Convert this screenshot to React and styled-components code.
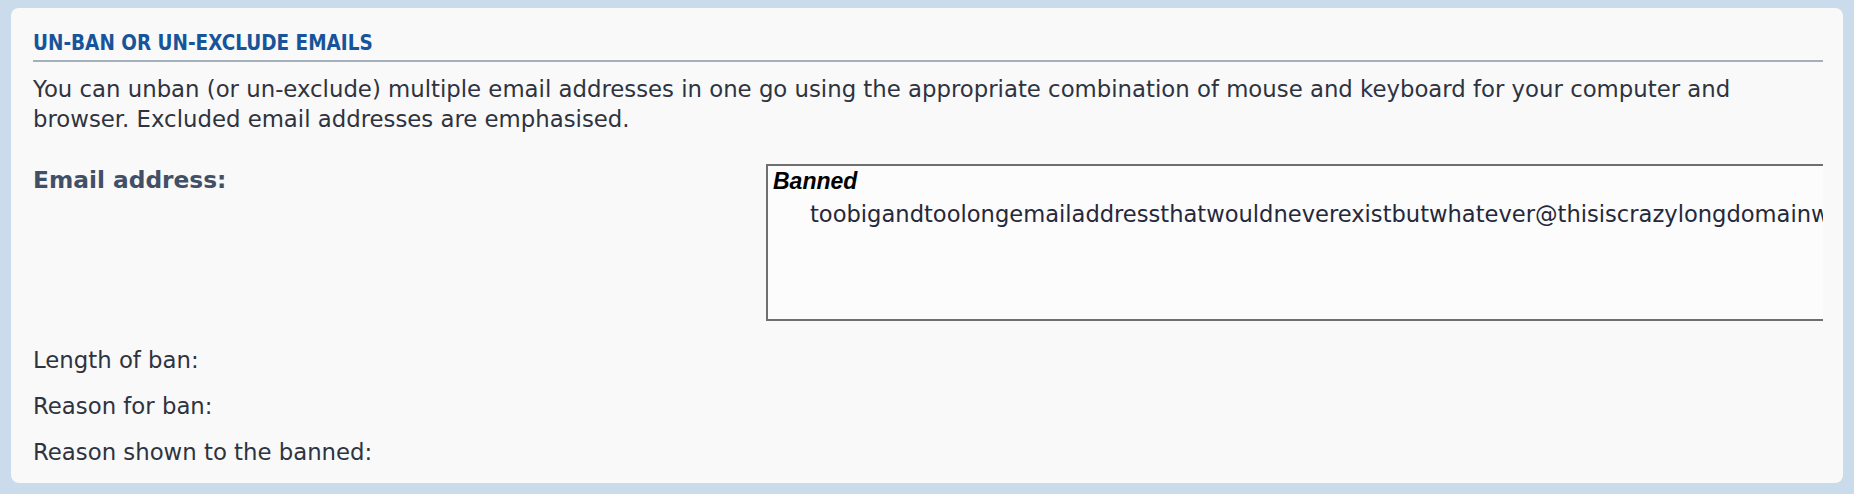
import React from "react";
import styled, { createGlobalStyle } from "styled-components";

const GlobalStyle = createGlobalStyle`
  html, body {
    margin: 0;
    padding: 0;
  }
  body {
    background: #cadcec;
    font-family: "DejaVu Sans", Verdana, sans-serif;
  }
`;

const Page = styled.div`
  display: flex;
  flex-direction: column;
  box-sizing: border-box;
  height: 100vh;
  padding: 8px 11px 11px 11px;
`;

const Panel = styled.section`
  flex: 1;
  min-width: 0;
  background: #f9f9f9;
  border-radius: 8px;
  padding: 23px 20px 0 22px;
  overflow: hidden;
`;

const Heading = styled.h3`
  margin: 0;
  padding-bottom: 5px;
  border-bottom: 2px solid #a5b0bd;
  font-family: "DejaVu Sans Condensed", "DejaVu Sans", sans-serif;
  font-stretch: condensed;
  font-weight: bold;
  font-size: 20.5px;
  line-height: 24px;
  color: #17549a;
  text-transform: uppercase;
`;

const Intro = styled.p`
  margin: 12px 0 0;
  font-size: 22.8px;
  line-height: 30px;
  color: #2f3340;
`;

const Form = styled.div`
  margin-top: 30px;
  display: flex;
  flex-direction: column;
`;

const Row = styled.div`
  display: grid;
  grid-template-columns: 733px minmax(0, 1fr);
  padding: ${({ $pad }) => $pad || "10px 0"};
`;

const Label = styled.div`
  padding-top: ${({ $top }) => $top || 0}px;
  font-size: ${({ $bold }) => ($bold ? "23.3px" : "22.8px")};
  font-weight: ${({ $bold }) => ($bold ? "bold" : "normal")};
  line-height: 26px;
  color: ${({ $bold }) => ($bold ? "#425067" : "#2f3340")};
`;

const Field = styled.div`
  min-width: 0;
  overflow: hidden;
`;

const ListBox = styled.div`
  box-sizing: border-box;
  width: 1300px;
  height: 157px;
  border: 2px solid #6f6f6f;
  background: #fcfcfc;
  padding: 2px 0 0 5px;
  overflow: hidden;
`;

const GroupLabel = styled.div`
  font-family: "Liberation Sans", Arial, sans-serif;
  font-weight: bold;
  font-style: italic;
  font-size: 23px;
  line-height: 26px;
  color: #000;
`;

const Option = styled.div`
  padding: 5px 0 0 37px;
  font-size: 22.6px;
  line-height: 30px;
  white-space: nowrap;
  color: #25283a;
`;

const emails = [
  "toobigandtoolongemailaddressthatwouldneverexistbutwhatever@thisiscrazylongdomainwhichwillneverexist.com",
];

const fields = ["Length of ban:", "Reason for ban:", "Reason shown to the banned:"];

export default function App() {
  return (
    <>
      <GlobalStyle />
      <Page>
        <Panel>
          <Heading>Un-ban or un-exclude emails</Heading>
          <Intro>
            You can unban (or un-exclude) multiple email addresses in one go using the
            appropriate combination of mouse and keyboard for your computer and browser.
            Excluded email addresses are emphasised.
          </Intro>
          <Form>
            <Row $pad="0 0 16px">
              <Label $bold $top={3}>Email address:</Label>
              <Field>
                <ListBox>
                  <GroupLabel>Banned</GroupLabel>
                  {emails.map((email) => (
                    <Option key={email}>{email}</Option>
                  ))}
                </ListBox>
              </Field>
            </Row>
            {fields.map((name) => (
              <Row key={name}>
                <Label>{name}</Label>
                <Field />
              </Row>
            ))}
          </Form>
        </Panel>
      </Page>
    </>
  );
}
